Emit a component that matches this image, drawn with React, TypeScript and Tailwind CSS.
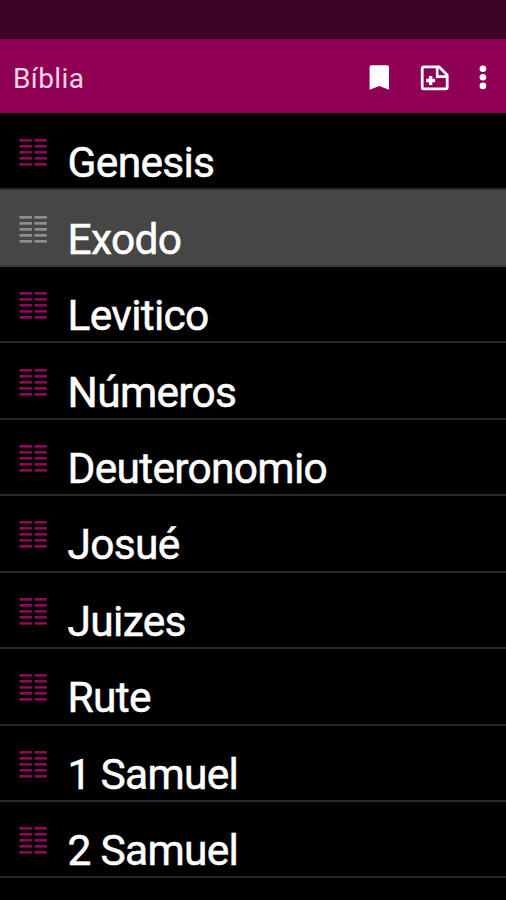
const books = [
  'Genesis',
  'Exodo',
  'Levitico',
  'Números',
  'Deuteronomio',
  'Josué',
  'Juizes',
  'Rute',
  '1 Samuel',
  '2 Samuel',
];

function BookIcon({ active }: { active: boolean }) {
  const rows = [1, 7, 13, 19, 25];
  return (
    <svg
      width="28"
      height="30"
      viewBox="0 0 28 30"
      className={active ? 'shrink-0 text-[#8e8e8e]' : 'shrink-0 text-[#8a0a58]'}
      fill="currentColor"
    >
      {rows.map((y) => (
        <g key={y}>
          <rect x="0.5" y={y} width="12.4" height="2.7" />
          <rect x="15.4" y={y} width="12.4" height="2.7" />
        </g>
      ))}
    </svg>
  );
}

function BookRow({ name, active }: { name: string; active: boolean }) {
  return (
    <li
      className={`flex h-[76.45px] shrink-0 items-start border-b-2 pl-[19px] ${
        active ? 'border-[#3a3a3a] bg-[#464646]' : 'border-[#292929] bg-black'
      }`}
    >
      <div className="pt-[24.2px]">
        <BookIcon active={active} />
      </div>
      <span className="ml-[20.6px] pt-[23.3px] text-[42.5px] leading-[51px] tracking-[-0.72px] whitespace-nowrap text-white [-webkit-text-stroke:0.5px_white]">
        {name}
      </span>
    </li>
  );
}

export default function App() {
  return (
    <div className="flex h-[900px] w-[506px] flex-col overflow-hidden bg-black font-['Roboto',sans-serif]">
      <div className="h-[39px] shrink-0 bg-[#3d0226]" />
      <header className="flex h-[74px] shrink-0 items-center bg-[#8f0055] pt-[3px] pl-[13px]">
        <h1 className="flex-1 pt-[2px] text-[28px] leading-none tracking-[0.4px] text-[#f5d5e5]">Bíblia</h1>
        <svg width="20" height="26" viewBox="0 0 20 26" fill="white" className="mr-[31px] overflow-visible">
          <path d="M1.2 0.3H17.2Q19 0.3 19 2.1V24.8L9.3 20.9L-0.4 24.8V2.1Q-0.4 0.3 1.2 0.3Z" />
        </svg>
        <svg width="28" height="26" viewBox="0 0 28 26" fill="none" stroke="white" className="mr-[30px] overflow-visible">
          <path
            d="M3 1.9H18.2L26.2 9.9V22Q26.2 23.8 24.4 23.8H3Q1.2 23.8 1.2 22V3.7Q1.2 1.9 3 1.9Z"
            strokeWidth="2.8"
            strokeLinejoin="round"
          />
          <path d="M16.2 2.5V11.6H25.6" strokeWidth="2.6" />
          <path d="M9.6 11V20M5.1 15.5H14.1" strokeWidth="3.4" />
        </svg>
        <svg width="8" height="26" viewBox="0 0 8 26" fill="white" className="mr-[19px]">
          <circle cx="3.9" cy="3.7" r="3.3" />
          <circle cx="3.9" cy="12.3" r="3.3" />
          <circle cx="3.9" cy="20.9" r="3.3" />
        </svg>
      </header>
      <ul className="flex flex-col pt-px">
        {books.map((name) => (
          <BookRow key={name} name={name} active={name === 'Exodo'} />
        ))}
      </ul>
    </div>
  );
}
